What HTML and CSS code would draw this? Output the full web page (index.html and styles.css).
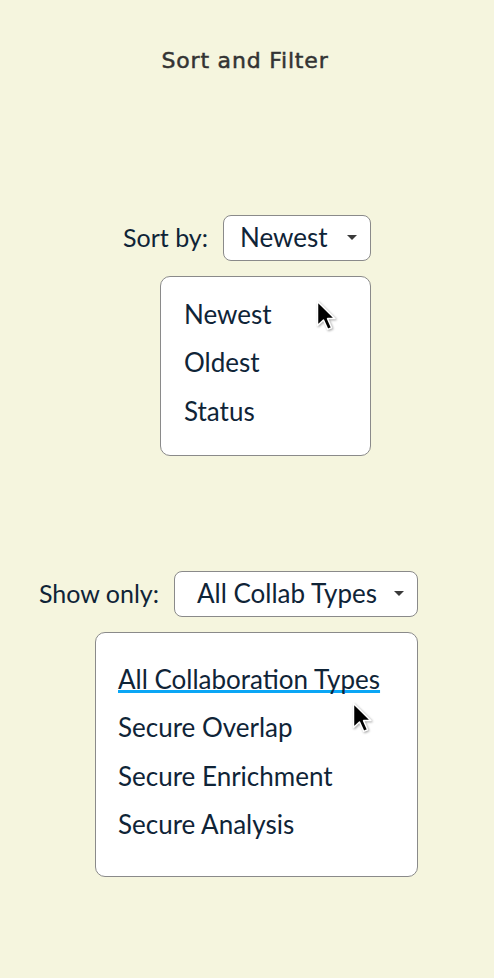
FILE: index.html
```html
<!DOCTYPE html>
<html lang="en">
<head>
    <meta charset="UTF-8">
    <meta name="viewport" content="width=device-width, initial-scale=1.0">
    <title>Sort and Filter</title>
    <link rel="stylesheet" href="styles.css">
</head>
<body>
    <header>
        <h1>Sort and Filter</h1>
    </header>

    <main>
        <!-- Sort dropdown, shown open -->
        <section class="group group-sort">
            <div class="field">
                <label class="field-label">Sort by:</label>
                <div class="select select-sort">
                    <span class="select-value">Newest</span>
                    <span class="caret"></span>
                </div>
            </div>
            <ul class="options options-sort">
                <li>Newest</li>
                <li>Oldest</li>
                <li>Status</li>
                <svg class="cursor cursor-sort" width="21" height="31.5" viewBox="-1 -1 14 21">
                    <path d="M0 0 L0 16 L4 12.3 L6.8 18.6 L9.4 17.5 L6.7 11.4 L11.6 11.4 Z" fill="#000" stroke="#fff" stroke-width="1" stroke-linejoin="round"/>
                </svg>
            </ul>
        </section>

        <!-- Filter dropdown, shown open -->
        <section class="group group-filter">
            <div class="field">
                <label class="field-label">Show only:</label>
                <div class="select select-filter">
                    <span class="select-value">All Collab Types</span>
                    <span class="caret"></span>
                </div>
            </div>
            <ul class="options options-filter">
                <li><span class="active">All Collaboration Types</span></li>
                <li>Secure Overlap</li>
                <li>Secure Enrichment</li>
                <li>Secure Analysis</li>
                <svg class="cursor cursor-filter" width="21" height="31.5" viewBox="-1 -1 14 21">
                    <path d="M0 0 L0 16 L4 12.3 L6.8 18.6 L9.4 17.5 L6.7 11.4 L11.6 11.4 Z" fill="#000" stroke="#fff" stroke-width="1" stroke-linejoin="round"/>
                </svg>
            </ul>
        </section>
    </main>
</body>
</html>
```

FILE: styles.css
```css
body {
    margin: 0;
    padding: 0;
    min-height: 100vh;
    background-color: #f5f5de;
    font-family: Lato, "Liberation Sans", sans-serif;
    color: #0f2437;
}
header {
    text-align: center;
}
h1 {
    margin: 48px 0 0;
    padding-right: 4px;
    font-family: "DejaVu Sans", sans-serif;
    font-size: 22px;
    font-weight: normal;
    letter-spacing: 0.8px;
    line-height: 26px;
    color: #333;
    -webkit-text-stroke: 0.5px #333;
}
main {
    display: flex;
    flex-direction: column;
}
.group {
    display: flex;
    flex-direction: column;
    align-items: flex-end;
}
.group-sort {
    width: 371px;
    margin-top: 141px;
}
.group-filter {
    width: 418px;
    margin-top: 115px;
}
.field {
    display: flex;
    align-items: center;
    gap: 15px;
}
.field-label {
    font-size: 25px;
    padding-bottom: 2px;
}
.select {
    box-sizing: border-box;
    height: 46px;
    display: flex;
    align-items: center;
    justify-content: space-between;
    background: white;
    border: 1px solid #8a8a8a;
    border-radius: 8px;
    padding-right: 13px;
    padding-bottom: 2px;
    font-size: 26px;
}
.select-sort {
    width: 148px;
    padding-left: 16px;
}
.select-filter {
    width: 244px;
    padding-left: 22px;
}
.caret {
    width: 0;
    height: 0;
    border-left: 5px solid transparent;
    border-right: 5px solid transparent;
    border-top: 5px solid #3a3a3a;
}
.options {
    position: relative;
    box-sizing: border-box;
    list-style-type: none;
    margin: 0;
    background: white;
    border: 1px solid #8a8a8a;
    border-radius: 10px;
    font-size: 26px;
    line-height: 48.3px;
}
.options-sort {
    width: 211px;
    height: 180px;
    margin-top: 15px;
    padding: 13px 0 0 23px;
}
.options-filter {
    width: 323px;
    height: 245px;
    margin-top: 15px;
    padding: 22px 0 0 22px;
}
.active {
    text-decoration: underline;
    text-decoration-color: #0aa6f5;
    text-decoration-thickness: 3px;
    text-underline-offset: 1px;
    text-decoration-skip-ink: none;
}
.cursor {
    position: absolute;
    filter: drop-shadow(1px 1px 1px rgba(0, 0, 0, 0.35));
}
.cursor-sort {
    left: 155px;
    top: 23px;
}
.cursor-filter {
    left: 256px;
    top: 69px;
}
```
